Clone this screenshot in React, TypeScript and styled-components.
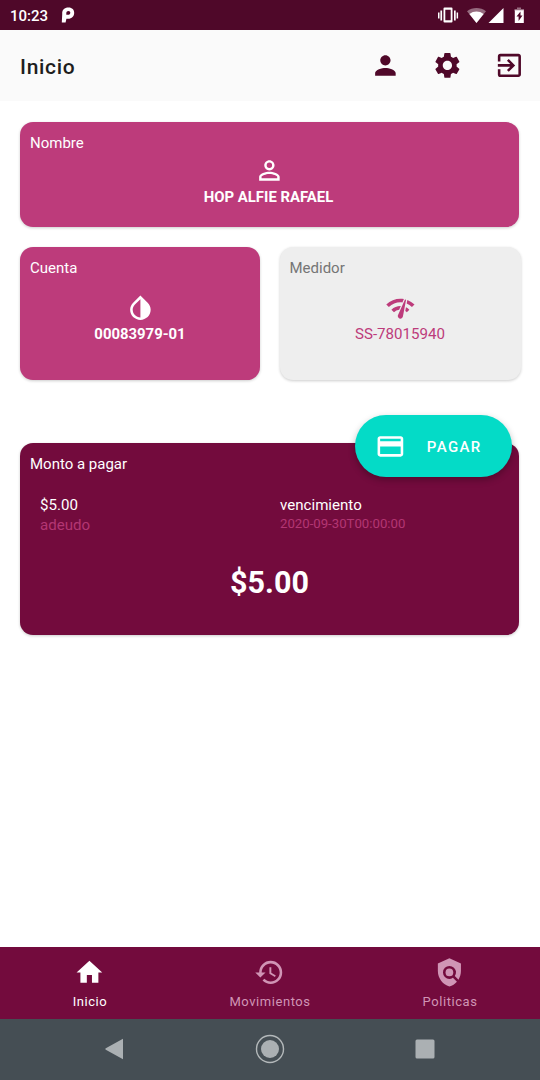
import React from "react";
import styled, { createGlobalStyle } from "styled-components";
import {
  MdPerson,
  MdSettings,
  MdExitToApp,
  MdPersonOutline,
  MdInvertColors,
  MdNetworkCheck,
  MdPayment,
  MdHome,
  MdHistory,
  MdPolicy,
} from "react-icons/md";

const GlobalStyle = createGlobalStyle`
  * { box-sizing: border-box; }
  body { margin: 0; background: #fff; font-family: Roboto, sans-serif; }
`;

const Screen = styled.div`
  display: flex;
  flex-direction: column;
  width: 540px;
  height: 1080px;
  background: #fff;
  overflow: hidden;
`;

const StatusBar = styled.div`
  display: flex;
  align-items: center;
  height: 30px;
  padding: 0 15px 0 10px;
  background: #4f0829;
  color: #fff;
`;

const Clock = styled.span`
  font-size: 15px;
  font-weight: 500;
  line-height: 20px;
  width: 51px;
  padding-top: 1px;
`;

const StatusIcons = styled.div`
  display: flex;
  align-items: center;
  margin-left: auto;
`;

const Header = styled.header`
  display: flex;
  align-items: center;
  height: 71px;
  padding: 0 15.4px 0 20px;
  background: #fafafa;
  color: #4f0829;
`;

const Title = styled.h1`
  margin: 3px auto 0 0;
  font-size: 21px;
  font-weight: 500;
  line-height: 28px;
  letter-spacing: 0.7px;
  color: #1e1e1e;
`;

const Actions = styled.div`
  display: flex;
  gap: 30.9px;
`;

const Content = styled.main`
  flex: 1;
  padding: 21px 21px 0 20px;
`;

const Card = styled.section<{ $bg?: string; $color?: string; $h: number }>`
  height: ${(p) => p.$h}px;
  padding: 11px 10px 0;
  border-radius: 13px;
  background: ${(p) => p.$bg ?? "#bd3b7b"};
  color: ${(p) => p.$color ?? "#fff"};
  box-shadow: 0 1px 3px rgba(0, 0, 0, 0.2);
`;

const Label = styled.div`
  font-size: 15px;
  line-height: 20px;
`;

const Centered = styled.div<{ $top: number; $color?: string }>`
  display: flex;
  flex-direction: column;
  align-items: center;
  margin-top: ${(p) => p.$top}px;
  color: ${(p) => p.$color ?? "inherit"};
`;

const Value = styled.div<{ $bold?: boolean }>`
  font-size: ${(p) => (p.$bold ? 14.9 : 15.1)}px;
  font-weight: ${(p) => (p.$bold ? 700 : 400)};
  line-height: 20px;
`;

const HolderName = styled(Value)`
  margin-top: 1px;
  padding-right: 2px;
`;

const Pair = styled.div`
  display: grid;
  grid-template-columns: 240px 241px;
  gap: 19.5px;
  margin-top: 20px;
`;

const Payment = styled.div`
  position: relative;
  margin-top: 63px;
`;

const PayButton = styled.button`
  position: absolute;
  top: -28px;
  right: 7px;
  display: flex;
  align-items: center;
  width: 157px;
  height: 62px;
  padding: 0 0 0 20px;
  gap: 21px;
  border: 0;
  border-radius: 31px;
  background: #04dbc7;
  color: #fff;
  font: 500 15px/20px Roboto, sans-serif;
  letter-spacing: 1.4px;
  box-shadow: 0 3px 7px rgba(0, 0, 0, 0.28);
`;

const PayText = styled.span`
  padding-top: 2px;
`;

const Details = styled.div`
  display: grid;
  grid-template-columns: 240px 1fr;
  margin-top: 21px;
  padding-left: 10px;
`;

const Caption = styled.div<{ $small?: boolean }>`
  font-size: ${(p) => (p.$small ? 13.2 : 15.1)}px;
  line-height: ${(p) => (p.$small ? 18 : 20)}px;
  color: #b33673;
`;

const Total = styled.div`
  margin-top: 30px;
  font-size: 30.5px;
  font-weight: 700;
  line-height: 36px;
  text-align: center;
`;

const Tabs = styled.nav`
  display: grid;
  grid-template-columns: repeat(3, 180px);
  height: 72px;
  background: #730b3d;
`;

const Tab = styled.div<{ $active?: boolean }>`
  display: flex;
  flex-direction: column;
  align-items: center;
  padding: 10px 1px 0 0;
  color: ${(p) => (p.$active ? "#fff" : "#d095b5")};
  font-size: 13px;
  line-height: 18px;
  letter-spacing: 0.55px;
`;

const TabText = styled.span`
  margin-top: 5px;
  padding-left: 1px;
`;

const SystemBar = styled.div`
  display: flex;
  justify-content: space-between;
  align-items: center;
  height: 61px;
  padding: 0 105px 2px 105px;
  background: #454e54;
`;

const ICON = 30.8;

export default function App() {
  return (
    <Screen>
      <GlobalStyle />
      <StatusBar>
        <Clock>10:23</Clock>
        <svg width="14" height="16" viewBox="0 0 14 16">
          <path
            fill="#fff"
            fillRule="evenodd"
            d="M1.2 7.5V5.6C1.6 2.2 4.2.5 7.6.5c3.600 0 5.600 2.300 5.600 5.200 0 3.600-2.400 6-6 6H5.400L4.600 15.500H.8L1.200 7.500zM5.300 7.800h1.600c1.600 0 2.400-.9 2.400-2.100 0-1.100-.7-1.800-1.800-1.800-1.300 0-2.100.8-2.200 2z"
          />
        </svg>
        <StatusIcons>
          <svg width="88" height="18" viewBox="0 0 88 18" fill="#fff">
            <path d="M1 6.500h1.500v6H1zM3.400 4.500h1.700v10H3.400zM17 4.500h1.700v10H17zM19.600 6.500h1.500v6h-1.500z" />
            <path fillRule="evenodd" d="M7.500 1.500h7a1 1 0 0 1 1 1V15.500a1 1 0 0 1-1 1h-7a1 1 0 0 1-1-1V2.500a1 1 0 0 1 1-1zm.8 2.200v10.600h5.400V3.700z" />
            <path opacity=".4" d="M30 5.200C35.500.8 43.500.8 49 5.200L39.500 17z" />
            <path d="M32.400 8c4.200-3.300 10-3.300 14.200 0L39.500 17z" />
            <path d="M66.500 2v15h-15z" />
            <path opacity=".4" d="M80 1.500h4V3h3v2h-9.500V3H80z" />
            <path fillRule="evenodd" d="M77.800 4.300h9V17h-9zm5.700 1.200-4 5h2.100V15l3.900-5.600h-2z" />
          </svg>
        </StatusIcons>
      </StatusBar>

      <Header>
        <Title>Inicio</Title>
        <Actions>
          <MdPerson size={ICON} />
          <MdSettings size={ICON} />
          <MdExitToApp size={ICON} />
        </Actions>
      </Header>

      <Content>
        <Card $h={105}>
          <Label>Nombre</Label>
          <Centered $top={2}>
            <MdPersonOutline size={ICON} />
            <HolderName $bold>HOP ALFIE RAFAEL</HolderName>
          </Centered>
        </Card>

        <Pair>
          <Card $h={133}>
            <Label>Cuenta</Label>
            <Centered $top={15}>
              <MdInvertColors size={ICON} />
              <Value $bold>00083979-01</Value>
            </Centered>
          </Card>
          <Card $h={133} $bg="#eeeeee" $color="#757575">
            <Label>Medidor</Label>
            <Centered $top={15} $color="#bd3b7b">
              <MdNetworkCheck size={ICON} />
              <Value>SS-78015940</Value>
            </Centered>
          </Card>
        </Pair>

        <Payment>
          <Card $h={192} $bg="#730b3d">
            <Label>Monto a pagar</Label>
            <Details>
              <div>
                <Value>$5.00</Value>
                <Caption>adeudo</Caption>
              </div>
              <div>
                <Value>vencimiento</Value>
                <Caption $small>2020-09-30T00:00:00</Caption>
              </div>
            </Details>
            <Total>$5.00</Total>
          </Card>
          <PayButton>
            <MdPayment size={ICON} />
            <PayText>PAGAR</PayText>
          </PayButton>
        </Payment>
      </Content>

      <Tabs>
        <Tab $active>
          <MdHome size={ICON} />
          <TabText>Inicio</TabText>
        </Tab>
        <Tab>
          <MdHistory size={ICON} />
          <TabText>Movimientos</TabText>
        </Tab>
        <Tab>
          <MdPolicy size={ICON} />
          <TabText>Politicas</TabText>
        </Tab>
      </Tabs>

      <SystemBar>
        <svg width="19" height="22" viewBox="0 0 19 22">
          <path fill="#abb0b3" d="M18 .8v20.400L.8 11.700a.8.8 0 0 1 0-1.400z" />
        </svg>
        <svg width="30" height="30" viewBox="0 0 30 30">
          <circle cx="15" cy="15" r="13.500" fill="none" stroke="#b3b8ba" strokeWidth="1.400" />
          <circle cx="15" cy="15" r="9" fill="#abb0b3" />
        </svg>
        <svg width="20" height="20" viewBox="0 0 20 20">
          <rect x=".5" y=".5" width="19" height="19" rx="1.500" fill="#abb0b3" />
        </svg>
      </SystemBar>
    </Screen>
  );
}
